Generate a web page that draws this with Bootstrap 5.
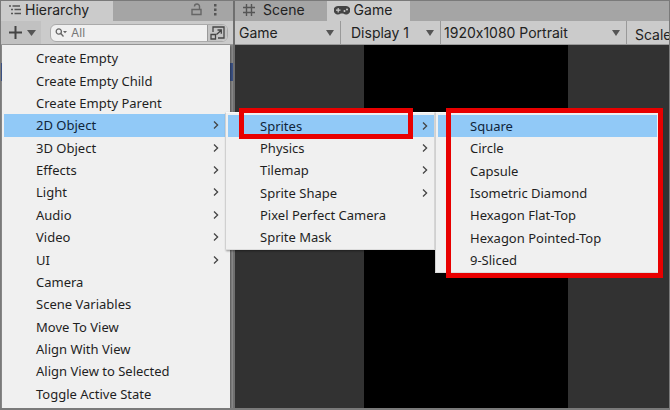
<!DOCTYPE html>
<html lang="en">
<head>
<meta charset="utf-8">
<meta name="viewport" content="width=device-width, initial-scale=1">
<title>Hierarchy – Create 2D Object</title>
<link rel="stylesheet" href="https://cdn.jsdelivr.net/npm/bootstrap@5.3.0/dist/css/bootstrap.min.css">
<style>
body { font-family: Inter, "Liberation Sans", sans-serif; font-size: 14px; line-height: 20px; color: #222; background: #777; }
.editor { border: 1px solid #7a7a7a; border-bottom-width: 2px; background: #6f6f6f; gap: 2px; }
.hier-pane { width: 232px; background: #8a8a8a; }
.hier-row { height: 18px; margin-top: 18px; background: #3d5488; }
.tab-strip { height: 20px; background: #a5a5a5; }
.pane-tab { border: 0; padding: 0 0 2px; height: 20px; font-size: 14px; line-height: 18px; color: #222; background: #a5a5a5; gap: 4px; }
.pane-tab.is-open { background: #cbcbcb; }
.pane-tab.scene-tab { padding-right: 22px; }
.pane-tab.game-tab { padding-right: 18px; padding-left: 7px; }
.strip-icon { border: 0; padding: 0; background: none; line-height: 0; }
.tool-strip { height: 24px; background: #cbcbcb; border-bottom: 1px solid #999; }
.add-btn { border: 0; padding: 0 5px 0 7px; width: 40px; height: 23px; background: #c1c1c1; line-height: 0; }
.find-box { height: 18px; margin: 0 5px 0 9px; border: 1px solid #aaa; border-radius: 6px; background: #f0f0f0; overflow: hidden; }
.find-box input { border: 0; padding: 0; background: none; font-size: 12px; line-height: 16px; outline: 0; }
.find-box input::placeholder { color: #777; opacity: 1; }
.pick-btn { border: 0; padding: 0; width: 20px; height: 16px; background: #c4c4c4; border-left: 1px solid #999; line-height: 0; }
.form-select.view-pick { height: 23px; padding: 0 18px 0 4px; border: 0; border-right: 1px solid #999; border-radius: 0; color: #222; font-size: 14px; line-height: 20px; font-feature-settings: "calt" 0;
  background: #cbcbcb url("data:image/svg+xml,%3Csvg xmlns='http://www.w3.org/2000/svg' viewBox='0 0 8 6'%3E%3Cpath fill='%23555' d='M0 0h8L4 6z'/%3E%3C/svg%3E") no-repeat right 6px center / 8px 6px; }
.pick-mode { width: 106px; }
.pick-display { width: 100px; }
.form-select.pick-display { padding-left: 10px; }
.pick-size { width: 186px; }
.form-select.pick-size { padding-left: 3px; }
.viewport-area { background: #323232; }
.game-screen { width: 204px; margin-left: 129px; background: #000; }
.popup { position: absolute; background: #f0f0f0; box-shadow: 1px 1px 2px #0006; font-family: "Noto Sans", "Open Sans", sans-serif; }
.popup-main { left: 1px; top: 44px; bottom: 0; width: 228px; padding: 2px 5px 3px 2px; }
.popup-stack { position: absolute; left: 224px; top: 111px; }
.popup-stack .popup { position: relative; padding: 2px 0 1px 2px; border: 1px solid #dcdcdc; border-top-color: #fafafa; border-left-color: #d0d0d0; }
.popup-kinds { width: 210px; height: 138px; }
.popup-shapes { width: 226px; height: 161px; }
.popup-shapes.popup { padding-right: 3px; }
.entry { flex: 1 1 0; min-height: 0; border: 0; padding: 0 6px 0 32px; background: none; color: #1f1f1f; font-size: 13px; line-height: 20px; text-align: left; }
.entry.is-lit { background: #91c9f7; color: #10253a; }
.frame { position: absolute; border: 5px solid #e80000; pointer-events: none; }
.frame-kind { left: 13px; top: -5px; width: 174px; height: 31px; }
.frame-shapes { left: 10px; right: -3px; top: -5px; bottom: -6px; }
</style>
<script src="https://cdn.jsdelivr.net/npm/bootstrap@5.3.0/dist/js/bootstrap.bundle.min.js"></script>
</head>
<body>
<svg class="d-none"><symbol id="chev" viewBox="0 0 6 8"><path d="M1 .5 4.600 4 1 7.500" fill="none" stroke="#444" stroke-width="1.300"/></symbol></svg>
<main class="editor vh-100 d-flex position-relative overflow-hidden">
  <section class="hier-pane flex-shrink-0 d-flex flex-column" aria-label="Hierarchy">
    <div class="tab-strip d-flex align-items-center">
      <button class="pane-tab is-open d-flex align-items-center ps-2 pe-4">
        <svg width="12" height="10" viewBox="0 0 12 10" fill="none" stroke="#555" stroke-width="1.300"><path d="M0 1h2M3.500 1H11M2 4.500h2M5.500 4.500H12M2 8.500h2M5.500 8.500H12"/></svg>
        Hierarchy
      </button>
      <button class="strip-icon ms-auto me-2 pb-1" aria-label="Lock"><svg width="11" height="13" viewBox="0 0 11 13" fill="none" stroke="#666" stroke-width="1.400"><path d="M1 6.500h9v5H1zM8.500 6.500V3.500a2.500 2.500 0 0 0-5 0"/></svg></button>
      <button class="strip-icon me-3 ps-1 pb-1" aria-label="More"><svg width="3" height="13" viewBox="0 0 3 13" fill="#555"><path d="M0 1h2.500v2.500H0zM0 5.500h2.500V8H0zM0 10h2.500v2.500H0z"/></svg></button>
    </div>
    <div class="tool-strip d-flex align-items-center">
      <button class="add-btn flex-shrink-0 d-flex align-items-center justify-content-between" aria-label="Create">
        <svg width="15" height="15" viewBox="0 0 15 15" stroke="#444" stroke-width="2"><path d="M7.500 1v13M1 7.500h13"/></svg>
        <svg width="9" height="6" viewBox="0 0 9 6" fill="#555"><path d="M0 0h9L4.500 6z"/></svg>
      </button>
      <div class="find-box d-flex align-items-center flex-fill ps-1">
        <svg class="flex-shrink-0 me-1" width="12" height="9" viewBox="0 0 12 9" fill="none" stroke="#666" stroke-width="1.300"><circle cx="3.800" cy="3.500" r="2.600"/><path d="M5.800 5.500 8.500 8.500"/><path d="M8 3h4l-2 2.200z" fill="#666" stroke="none"/></svg>
        <input class="w-100" type="text" placeholder="All" aria-label="Search hierarchy">
        <button class="pick-btn flex-shrink-0" aria-label="Search window"><svg width="15" height="14" viewBox="0 0 15 14" fill="none" stroke="#444" stroke-width="1.300"><path d="M3 6V1h11v11H8M1 8.500h4.500V13H1zM6.500 8.500 11 4.500M7.500 4H11.300v3.800"/></svg></button>
      </div>
    </div>
    <div class="hier-row"></div>
  </section>
  <section class="flex-fill d-flex flex-column overflow-hidden" aria-label="Game view">
    <div class="tab-strip d-flex">
      <button class="pane-tab scene-tab d-flex align-items-center ps-2">
        <svg class="me-1" width="12" height="12" viewBox="0 0 12 12" stroke="#555" stroke-width="1.400"><path d="M3.500 0v12M8.500 0v12M0 3.500h12M0 8.500h12"/></svg>
        Scene
      </button>
      <button class="pane-tab game-tab is-open d-flex align-items-center">
        <svg width="16" height="9" viewBox="0 0 16 9"><path fill="#444" d="M4 0h8a4.300 4.300 0 1 1-2.800 7.500H6.800A4.300 4.300 0 1 1 4 0z"/><path d="M2 4.200h4.500M4.200 2v4.500" stroke="#cbcbcb" stroke-width="1.200"/><circle cx="10.500" cy="5" r="1" fill="#cbcbcb"/><circle cx="13" cy="3.500" r="1" fill="#cbcbcb"/></svg>
        Game
      </button>
    </div>
    <div class="tool-strip d-flex overflow-hidden">
      <select class="form-select view-pick pick-mode flex-shrink-0" aria-label="View mode"><option>Game</option></select>
      <select class="form-select view-pick pick-display flex-shrink-0" aria-label="Display"><option>Display 1</option></select>
      <select class="form-select view-pick pick-size flex-shrink-0" aria-label="Resolution"><option>1920x1080 Portrait</option></select>
      <span class="ps-2 pt-1 flex-shrink-0">Scale</span>
    </div>
    <div class="viewport-area flex-fill d-flex"><div class="game-screen"></div></div>
  </section>

  <div class="popup popup-main d-flex flex-column" role="menu" aria-label="Create">
    <button class="entry" role="menuitem">Create Empty</button>
    <button class="entry" role="menuitem">Create Empty Child</button>
    <button class="entry" role="menuitem">Create Empty Parent</button>
    <button class="entry is-lit d-flex align-items-center justify-content-between" role="menuitem">2D Object<svg width="6" height="8"><use href="#chev"/></svg></button>
    <button class="entry d-flex align-items-center justify-content-between" role="menuitem">3D Object<svg width="6" height="8"><use href="#chev"/></svg></button>
    <button class="entry d-flex align-items-center justify-content-between" role="menuitem">Effects<svg width="6" height="8"><use href="#chev"/></svg></button>
    <button class="entry d-flex align-items-center justify-content-between" role="menuitem">Light<svg width="6" height="8"><use href="#chev"/></svg></button>
    <button class="entry d-flex align-items-center justify-content-between" role="menuitem">Audio<svg width="6" height="8"><use href="#chev"/></svg></button>
    <button class="entry d-flex align-items-center justify-content-between" role="menuitem">Video<svg width="6" height="8"><use href="#chev"/></svg></button>
    <button class="entry d-flex align-items-center justify-content-between" role="menuitem">UI<svg width="6" height="8"><use href="#chev"/></svg></button>
    <button class="entry" role="menuitem">Camera</button>
    <button class="entry" role="menuitem">Scene Variables</button>
    <button class="entry" role="menuitem">Move To View</button>
    <button class="entry" role="menuitem">Align With View</button>
    <button class="entry" role="menuitem">Align View to Selected</button>
    <button class="entry" role="menuitem">Toggle Active State</button>
  </div>

  <div class="popup-stack d-flex align-items-start">
    <div class="popup popup-kinds d-flex flex-column" role="menu" aria-label="2D Object">
      <button class="entry is-lit d-flex align-items-center justify-content-between" role="menuitem">Sprites<svg width="6" height="8"><use href="#chev"/></svg></button>
      <button class="entry d-flex align-items-center justify-content-between" role="menuitem">Physics<svg width="6" height="8"><use href="#chev"/></svg></button>
      <button class="entry d-flex align-items-center justify-content-between" role="menuitem">Tilemap<svg width="6" height="8"><use href="#chev"/></svg></button>
      <button class="entry d-flex align-items-center justify-content-between" role="menuitem">Sprite Shape<svg width="6" height="8"><use href="#chev"/></svg></button>
      <button class="entry" role="menuitem">Pixel Perfect Camera</button>
      <button class="entry" role="menuitem">Sprite Mask</button>
      <div class="frame frame-kind"></div>
    </div>
    <div class="popup popup-shapes d-flex flex-column" role="menu" aria-label="Sprites">
      <button class="entry is-lit" role="menuitem">Square</button>
      <button class="entry" role="menuitem">Circle</button>
      <button class="entry" role="menuitem">Capsule</button>
      <button class="entry" role="menuitem">Isometric Diamond</button>
      <button class="entry" role="menuitem">Hexagon Flat-Top</button>
      <button class="entry" role="menuitem">Hexagon Pointed-Top</button>
      <button class="entry" role="menuitem">9-Sliced</button>
      <div class="frame frame-shapes"></div>
    </div>
  </div>
</main>
</body>
</html>
